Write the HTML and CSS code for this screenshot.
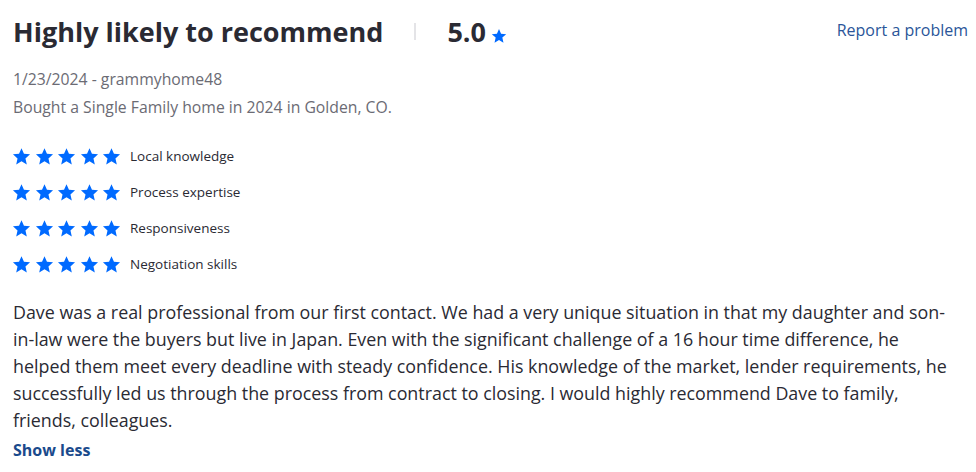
FILE: index.html
```html
<!DOCTYPE html>
<html lang="en">
    <head>
        <meta charset="UTF-8">
        <meta name="viewport" content="width=device-width,initial-scale=1.0">
        <title>Review</title>
        <link rel="stylesheet" href="styles.css">
    </head>
    <body>
        <main class="review">
            <div class="top">
                <div class="headline">
                    <h2 class="title">Highly likely to recommend</h2>
                    <span class="divider"></span>
                    <span class="score">5.0</span>
                    <svg class="score-star" viewBox="0 0 24 24"><path d="M12 1.5l3.1 7.1 7.7.7-5.8 5.1 1.7 7.6L12 18l-6.7 4 1.7-7.6-5.8-5.1 7.7-.7z"/></svg>
                </div>
                <a class="report" href="#">Report a problem</a>
            </div>
            <p class="meta">1/23/2024 - grammyhome48</p>
            <p class="meta">Bought a Single Family home in 2024 in Golden, CO.</p>
            <ul class="ratings">
                <li class="rating">
                    <span class="stars">
                        <svg viewBox="0 0 24 24"><path d="M12 1.5l3.1 7.1 7.7.7-5.8 5.1 1.7 7.6L12 18l-6.7 4 1.7-7.6-5.8-5.1 7.7-.7z"/></svg>
                        <svg viewBox="0 0 24 24"><path d="M12 1.5l3.1 7.1 7.7.7-5.8 5.1 1.7 7.6L12 18l-6.7 4 1.7-7.6-5.8-5.1 7.7-.7z"/></svg>
                        <svg viewBox="0 0 24 24"><path d="M12 1.5l3.1 7.1 7.7.7-5.8 5.1 1.7 7.6L12 18l-6.7 4 1.7-7.6-5.8-5.1 7.7-.7z"/></svg>
                        <svg viewBox="0 0 24 24"><path d="M12 1.5l3.1 7.1 7.7.7-5.8 5.1 1.7 7.6L12 18l-6.7 4 1.7-7.6-5.8-5.1 7.7-.7z"/></svg>
                        <svg viewBox="0 0 24 24"><path d="M12 1.5l3.1 7.1 7.7.7-5.8 5.1 1.7 7.6L12 18l-6.7 4 1.7-7.6-5.8-5.1 7.7-.7z"/></svg>
                    </span>
                    <span class="label">Local knowledge</span>
                </li>
                <li class="rating">
                    <span class="stars">
                        <svg viewBox="0 0 24 24"><path d="M12 1.5l3.1 7.1 7.7.7-5.8 5.1 1.7 7.6L12 18l-6.7 4 1.7-7.6-5.8-5.1 7.7-.7z"/></svg>
                        <svg viewBox="0 0 24 24"><path d="M12 1.5l3.1 7.1 7.7.7-5.8 5.1 1.7 7.6L12 18l-6.7 4 1.7-7.6-5.8-5.1 7.7-.7z"/></svg>
                        <svg viewBox="0 0 24 24"><path d="M12 1.5l3.1 7.1 7.7.7-5.8 5.1 1.7 7.6L12 18l-6.7 4 1.7-7.6-5.8-5.1 7.7-.7z"/></svg>
                        <svg viewBox="0 0 24 24"><path d="M12 1.5l3.1 7.1 7.7.7-5.8 5.1 1.7 7.6L12 18l-6.7 4 1.7-7.6-5.8-5.1 7.7-.7z"/></svg>
                        <svg viewBox="0 0 24 24"><path d="M12 1.5l3.1 7.1 7.7.7-5.8 5.1 1.7 7.6L12 18l-6.7 4 1.7-7.6-5.8-5.1 7.7-.7z"/></svg>
                    </span>
                    <span class="label">Process expertise</span>
                </li>
                <li class="rating">
                    <span class="stars">
                        <svg viewBox="0 0 24 24"><path d="M12 1.5l3.1 7.1 7.7.7-5.8 5.1 1.7 7.6L12 18l-6.7 4 1.7-7.6-5.8-5.1 7.7-.7z"/></svg>
                        <svg viewBox="0 0 24 24"><path d="M12 1.5l3.1 7.1 7.7.7-5.8 5.1 1.7 7.6L12 18l-6.7 4 1.7-7.6-5.8-5.1 7.7-.7z"/></svg>
                        <svg viewBox="0 0 24 24"><path d="M12 1.5l3.1 7.1 7.7.7-5.8 5.1 1.7 7.6L12 18l-6.7 4 1.7-7.6-5.8-5.1 7.7-.7z"/></svg>
                        <svg viewBox="0 0 24 24"><path d="M12 1.5l3.1 7.1 7.7.7-5.8 5.1 1.7 7.6L12 18l-6.7 4 1.7-7.6-5.8-5.1 7.7-.7z"/></svg>
                        <svg viewBox="0 0 24 24"><path d="M12 1.5l3.1 7.1 7.7.7-5.8 5.1 1.7 7.6L12 18l-6.7 4 1.7-7.6-5.8-5.1 7.7-.7z"/></svg>
                    </span>
                    <span class="label">Responsiveness</span>
                </li>
                <li class="rating">
                    <span class="stars">
                        <svg viewBox="0 0 24 24"><path d="M12 1.5l3.1 7.1 7.7.7-5.8 5.1 1.7 7.6L12 18l-6.7 4 1.7-7.6-5.8-5.1 7.7-.7z"/></svg>
                        <svg viewBox="0 0 24 24"><path d="M12 1.5l3.1 7.1 7.7.7-5.8 5.1 1.7 7.6L12 18l-6.7 4 1.7-7.6-5.8-5.1 7.7-.7z"/></svg>
                        <svg viewBox="0 0 24 24"><path d="M12 1.5l3.1 7.1 7.7.7-5.8 5.1 1.7 7.6L12 18l-6.7 4 1.7-7.6-5.8-5.1 7.7-.7z"/></svg>
                        <svg viewBox="0 0 24 24"><path d="M12 1.5l3.1 7.1 7.7.7-5.8 5.1 1.7 7.6L12 18l-6.7 4 1.7-7.6-5.8-5.1 7.7-.7z"/></svg>
                        <svg viewBox="0 0 24 24"><path d="M12 1.5l3.1 7.1 7.7.7-5.8 5.1 1.7 7.6L12 18l-6.7 4 1.7-7.6-5.8-5.1 7.7-.7z"/></svg>
                    </span>
                    <span class="label">Negotiation skills</span>
                </li>
            </ul>
            <p class="text">Dave was a real professional from our first contact. We had a very unique situation in that my daughter and son-in-law were the buyers but live in Japan. Even with the significant challenge of a 16 hour time difference, he helped them meet every deadline with steady confidence. His knowledge of the market, lender requirements, he successfully led us through the process from contract to closing. I would highly recommend Dave to family, friends, colleagues.</p>
            <a class="toggle" href="#">Show less</a>
        </main>
    </body>
</html>
```

FILE: styles.css
```css
*{
    margin: 0;
    padding: 0;
    box-sizing: border-box;
}
body{
    background-color: #fff;
    font-family: "Open Sans", "Noto Sans", sans-serif;
    color: #2a2a33;
}
.review{
    padding: 12px 8px 0 13px;
}
.top{
    display: flex;
    justify-content: space-between;
    align-items: flex-start;
    margin-bottom: 15px;
}
.headline{
    display: flex;
    align-items: center;
    height: 38px;
}
.title{
    font-size: 27px;
    font-weight: 700;
    color: #2a2a33;
}
.divider{
    width: 2px;
    height: 17px;
    background-color: #e4e4e7;
    margin: 0 31px 0 31px;
}
.score{
    font-size: 27px;
    font-weight: 700;
}
.score-star{
    width: 16px;
    height: 16px;
    fill: #006aff;
    margin: 10px 0 0 5px;
}
.report{
    font-size: 16px;
    color: #2a5599;
    text-decoration: none;
    margin-top: 7px;
}
.meta{
    font-size: 15.75px;
    line-height: 28px;
    color: #6b6b74;
}
.ratings{
    list-style: none;
    margin-top: 17px;
}
.rating{
    display: flex;
    align-items: center;
    height: 36px;
}
.stars{
    display: flex;
    gap: 3.5px;
    margin-left: -1px;
    margin-right: 9px;
}
.stars svg{
    width: 19px;
    height: 19px;
    fill: #006aff;
}
.label{
    font-size: 13.5px;
    color: #2a2a33;
}
.text{
    margin-top: 17px;
    font-size: 17.85px;
    line-height: 27px;
    color: #2a2a33;
    padding-right: 8px;
}
.toggle{
    display: inline-block;
    font-size: 16px;
    font-weight: 700;
    color: #1a4a8c;
    text-decoration: none;
    margin-top: 5px;
}
```
